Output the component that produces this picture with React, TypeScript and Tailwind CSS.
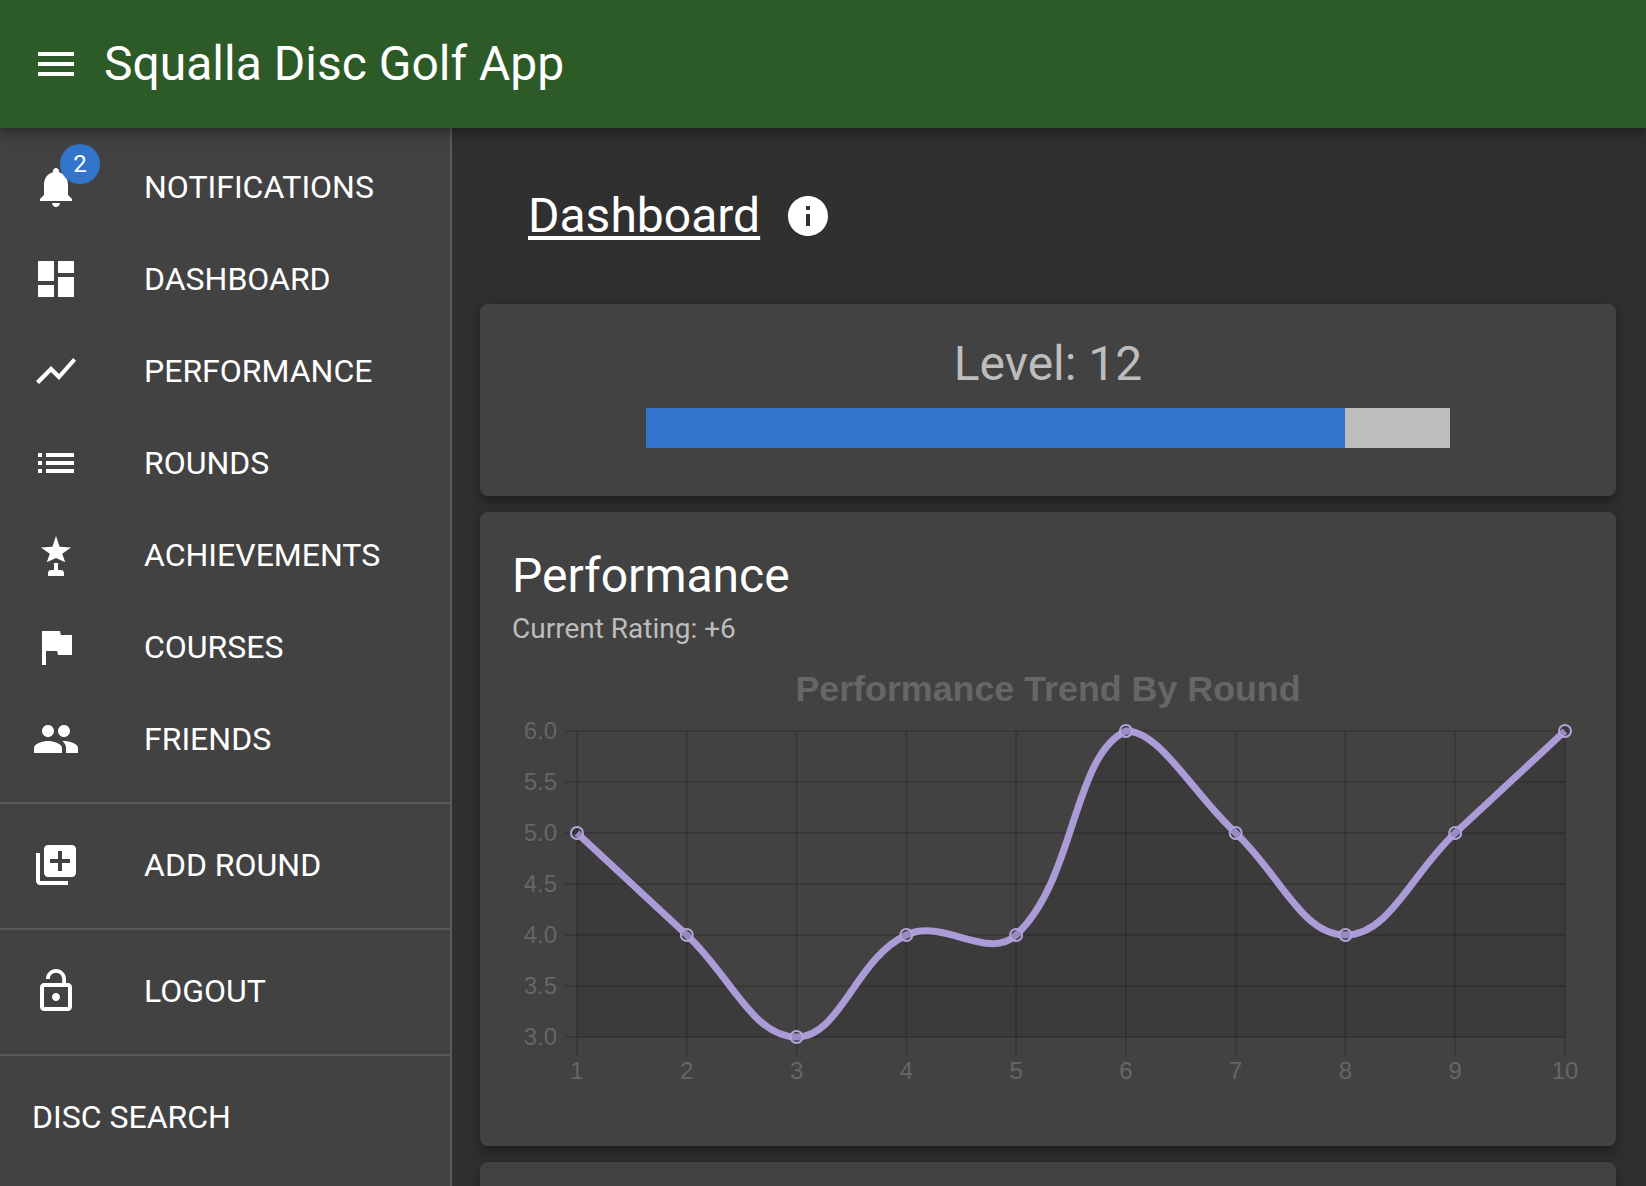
import React from "react";

const roboto = "font-['Roboto',sans-serif]";

// chart.js style spline, so the curve bends the way the real chart does
const data = [5, 4, 3, 4, 4, 6, 5, 4, 5, 6];
const left = 65;
const right = 1053;
const top = 76;
const bottom = 382;
const stepX = (right - left) / 9;
const yOf = (v: number) => bottom - ((v - 3) / 3) * (bottom - top);
const points = data.map((v, i) => ({ x: left + i * stepX, y: yOf(v) }));

function buildPath(close: boolean) {
  const clampY = (y: number) => Math.min(bottom, Math.max(top, y));
  const ctrl = points.map((p, i) => {
    const a = points[i - 1] ?? p;
    const c = points[i + 1] ?? p;
    const d01 = Math.hypot(p.x - a.x, p.y - a.y);
    const d12 = Math.hypot(c.x - p.x, c.y - p.y);
    const s01 = d01 / (d01 + d12);
    const s12 = d12 / (d01 + d12);
    return {
      px: p.x - 0.4 * s01 * (c.x - a.x),
      py: clampY(p.y - 0.4 * s01 * (c.y - a.y)),
      nx: p.x + 0.4 * s12 * (c.x - a.x),
      ny: clampY(p.y + 0.4 * s12 * (c.y - a.y)),
    };
  });
  let d = `M${points[0].x} ${points[0].y}`;
  for (let i = 1; i < points.length; i++) {
    d += ` C${ctrl[i - 1].nx} ${ctrl[i - 1].ny} ${ctrl[i].px} ${ctrl[i].py} ${points[i].x} ${points[i].y}`;
  }
  if (close) d += ` L${right} ${bottom} L${left} ${bottom} Z`;
  return d;
}

const Icon = ({ d }: { d: string }) => (
  <svg viewBox="0 0 24 24" className="h-12 w-12 shrink-0 fill-white">
    <path d={d} />
  </svg>
);

const navItems = [
  { label: "DASHBOARD", d: "M3 13h8V3H3v10zm0 8h8v-6H3v6zm10 0h8V11h-8v10zm0-18v6h8V3h-8z" },
  { label: "PERFORMANCE", d: "M3.5 18.49l6-6.01 4 4L22 6.92l-1.41-1.41-7.09 7.97-4-4L2 16.99z" },
  { label: "ROUNDS", d: "M3 13h2v-2H3v2zm0 4h2v-2H3v2zm0-8h2V7H3v2zm4 4h14v-2H7v2zm0 4h14v-2H7v2zM7 7v2h14V7H7z" },
  {
    label: "ACHIEVEMENTS",
    d: "M12 2.5l1.8 5.4 5.7.3-4.4 3.2 1.5 4.2-4.6-2.1-4.6 2.1 1.5-4.2-4.4-3.2 5.7-.3zM11 16h2v3.5h1.5c.9 0 1.5.6 1.5 1.5v1.5H8V21c0-.9.6-1.5 1.5-1.5H11z",
  },
  { label: "COURSES", d: "M14.4 6L14 4H5v17h2v-7h5.6l.4 2h7V6z" },
  { label: "FRIENDS", d: "M16 11c1.66 0 2.99-1.34 2.99-3S17.66 5 16 5c-1.66 0-3 1.34-3 3s1.34 3 3 3zm-8 0c1.66 0 2.99-1.34 2.99-3S9.66 5 8 5C6.34 5 5 6.34 5 8s1.34 3 3 3zm0 2c-2.33 0-7 1.17-7 3.5V19h14v-2.5c0-2.33-4.67-3.5-7-3.5zm8 0c-.29 0-.62.02-.97.05 1.16.84 1.97 1.97 1.97 3.45V19h6v-2.5c0-2.33-4.67-3.5-7-3.5z" },
];

const NavRow = ({ label, children }: { label: string; children: React.ReactNode }) => (
  <div className="flex h-[92px] items-center pl-8">
    <div className="w-28 shrink-0">{children}</div>
    <span className="text-[32px] leading-none text-white">{label}</span>
  </div>
);

const Sidebar = () => (
  <aside className="flex w-[452px] shrink-0 flex-col border-r-2 border-[#5a5a5a] bg-[#424242]">
    <div className="pt-[13px] pb-[17px]">
      <NavRow label="NOTIFICATIONS">
        <div className="relative h-12 w-12">
          <Icon d="M12 22c1.1 0 2-.9 2-2h-4c0 1.1.89 2 2 2zm6-6v-5c0-3.07-1.64-5.64-4.5-6.32V4c0-.83-.67-1.5-1.5-1.5s-1.5.67-1.5 1.5v.68C7.63 5.36 6 7.92 6 11v5l-2 2v1h16v-1l-2-2z" />
          <span className="absolute -top-[19px] -right-5 flex h-10 w-10 items-center justify-center rounded-full bg-[#3375cb] text-[24px] leading-none text-white">
            2
          </span>
        </div>
      </NavRow>
      {navItems.map((item) => (
        <NavRow key={item.label} label={item.label}>
          <Icon d={item.d} />
        </NavRow>
      ))}
    </div>
    <div className="border-t-2 border-[#5a5a5a] pt-[15px] pb-[17px]">
      <NavRow label="ADD ROUND">
        <Icon d="M4 6H2v14c0 1.1.9 2 2 2h14v-2H4V6zm16-4H8c-1.1 0-2 .9-2 2v12c0 1.1.9 2 2 2h12c1.1 0 2-.9 2-2V4c0-1.1-.9-2-2-2zm-1 9h-4v4h-2v-4H9V9h4V5h2v4h4v2z" />
      </NavRow>
    </div>
    <div className="border-t-2 border-[#5a5a5a] pt-[15px] pb-[17px]">
      <NavRow label="LOGOUT">
        <Icon d="M12 17c1.1 0 2-.9 2-2s-.9-2-2-2-2 .9-2 2 .9 2 2 2zm6-9h-1V6c0-2.76-2.24-5-5-5S7 3.24 7 6h1.9c0-1.71 1.39-3.1 3.1-3.1 1.71 0 3.1 1.39 3.1 3.1v2H6c-1.1 0-2 .9-2 2v10c0 1.1.9 2 2 2h12c1.1 0 2-.9 2-2V10c0-1.1-.9-2-2-2zm0 12H6V10h12v10z" />
      </NavRow>
    </div>
    <div className="border-t-2 border-[#5a5a5a] px-8 pt-[45px] text-[32px] leading-none text-white">
      DISC SEARCH
    </div>
  </aside>
);

const Chart = () => (
  <svg viewBox="0 0 1073 432" className="mt-3 block h-[432px] w-[1073px]">
    <path d={buildPath(true)} fill="rgba(0,0,0,0.1)" />
    <g stroke="rgba(0,0,0,0.14)" strokeWidth="2">
      {[0, 1, 2, 3, 4, 5, 6].map((i) => {
        const y = top + (i * (bottom - top)) / 6;
        return <line key={i} x1={left - 12} x2={right} y1={y} y2={y} />;
      })}
      {data.map((_, i) => {
        const x = left + i * stepX;
        return <line key={i} x1={x} x2={x} y1={top} y2={bottom + 19} />;
      })}
    </g>
    <text x="536" y="46" textAnchor="middle" fill="#666" fontSize="35.8" fontWeight="700" fontFamily="'Liberation Sans', sans-serif">
      Performance Trend By Round
    </text>
    <g fill="#666" fontSize="24" fontFamily="'Liberation Sans', sans-serif">
      {["6.0", "5.5", "5.0", "4.5", "4.0", "3.5", "3.0"].map((t, i) => (
        <text key={t} x={left - 20} y={top + (i * (bottom - top)) / 6 + 8} textAnchor="end">
          {t}
        </text>
      ))}
      {data.map((_, i) => (
        <text key={i} x={left + i * stepX} y={424} textAnchor="middle">
          {i + 1}
        </text>
      ))}
    </g>
    <path d={buildPath(false)} fill="none" stroke="#ab9bd7" strokeWidth="7" />
    {points.map((p, i) => (
      <circle key={i} cx={p.x} cy={p.y} r="6" fill="rgba(0,0,0,0.1)" stroke="#b3a4dc" strokeWidth="2" />
    ))}
  </svg>
);

export default function App() {
  return (
    <div className={`flex h-screen flex-col overflow-hidden bg-[#303030] ${roboto}`}>
      <header className="relative z-10 flex h-32 shrink-0 items-center bg-[#2d5b28] pl-8 shadow-[0_4px_8px_-2px_rgba(0,0,0,0.2),0_8px_10px_0_rgba(0,0,0,0.14),0_2px_20px_0_rgba(0,0,0,0.12)]">
        <Icon d="M3 18h18v-2H3v2zm0-5h18v-2H3v2zm0-7v2h18V6H3z" />
        <h1 className="ml-6 text-[48px] leading-none font-normal text-white">Squalla Disc Golf App</h1>
      </header>
      <div className="flex min-h-0 flex-1">
        <Sidebar />
        <main className="min-w-0 flex-1 overflow-hidden pr-[30px] pl-7">
          <div className="flex h-[176px] items-center pl-12">
            <h2 className="text-[48px] leading-none font-normal text-white underline decoration-[4px] underline-offset-[4px]">
              Dashboard
            </h2>
            <svg viewBox="0 0 24 24" className="ml-6 h-12 w-12 fill-white">
              <path d="M12 2C6.48 2 2 6.48 2 12s4.48 10 10 10 10-4.48 10-10S17.52 2 12 2zm1 15h-2v-6h2v6zm0-8h-2V7h2v2z" />
            </svg>
          </div>
          <section className="flex h-[192px] flex-col items-center rounded-lg bg-[#424242] pt-9 shadow-[0_4px_8px_-2px_rgba(0,0,0,0.2),0_8px_10px_0_rgba(0,0,0,0.14),0_2px_20px_0_rgba(0,0,0,0.12)]">
            <div className="text-[48px] leading-none font-normal text-[#bdbdbd]">Level: 12</div>
            <div className="mt-5 flex h-10 w-[804px] bg-[#bdbdbd]">
              <div className="h-full w-[699px] bg-[#3375cb]" />
            </div>
          </section>
          <section className="mt-4 h-[634px] rounded-lg bg-[#424242] px-8 pt-10 shadow-[0_4px_8px_-2px_rgba(0,0,0,0.2),0_8px_10px_0_rgba(0,0,0,0.14),0_2px_20px_0_rgba(0,0,0,0.12)]">
            <div className="text-[48px] leading-none text-white">Performance</div>
            <div className="mt-[15px] text-[28px] leading-none text-[#bdbdbd]">Current Rating: +6</div>
            <Chart />
          </section>
          <section className="mt-4 h-[200px] rounded-lg bg-[#424242] shadow-[0_4px_8px_-2px_rgba(0,0,0,0.2),0_8px_10px_0_rgba(0,0,0,0.14),0_2px_20px_0_rgba(0,0,0,0.12)]" />
        </main>
      </div>
    </div>
  );
}
